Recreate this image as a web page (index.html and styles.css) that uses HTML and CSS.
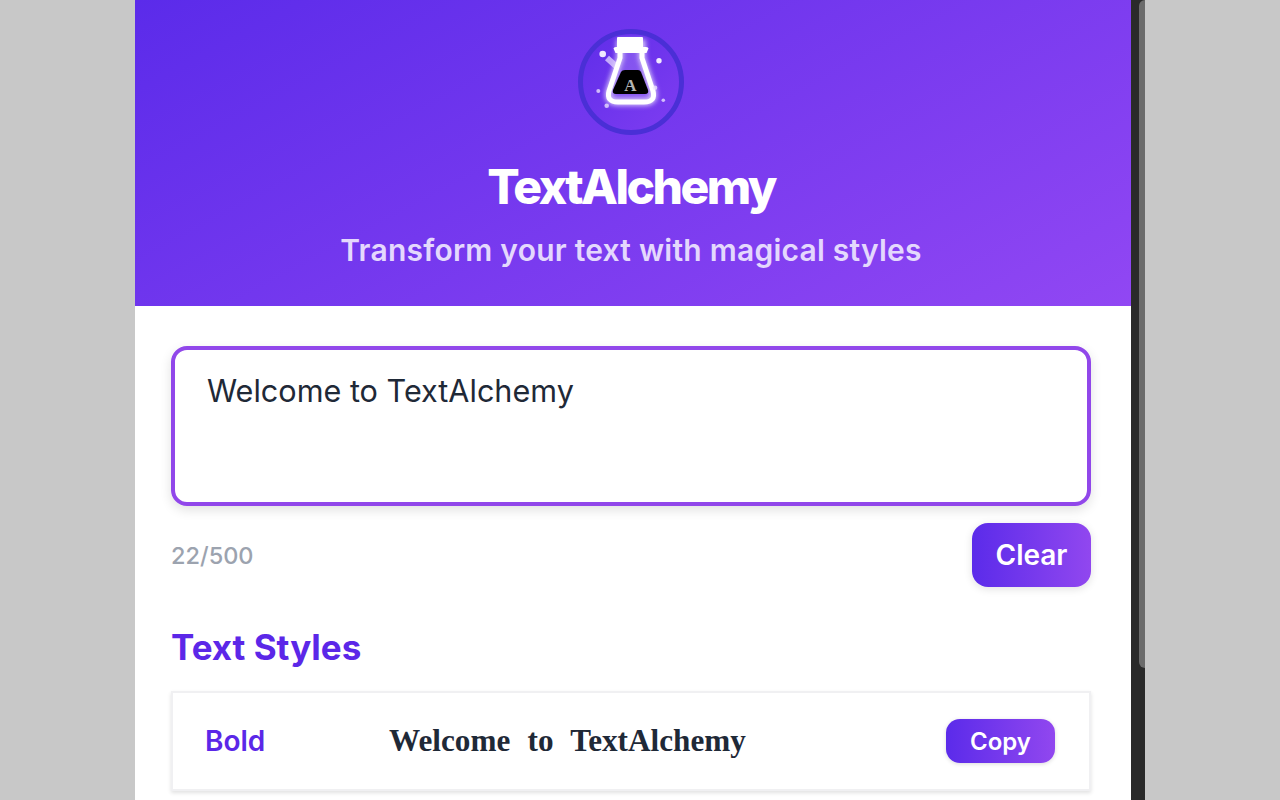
FILE: index.html
```
<!DOCTYPE html>
<html lang="en">
<head>
<meta charset="utf-8">
<title>TextAlchemy</title>
<link rel="stylesheet" href="styles.css">
</head>
<body>
<div class="frame">
  <main class="app">
    <header class="hero">
      <svg class="logo" width="108" height="108" viewBox="0 0 108 108">
        <defs>
          <linearGradient id="lg" x1="0" y1="0" x2="1" y2="1"><stop offset="0" stop-color="#5f2de9"/><stop offset="1" stop-color="#7f3df1"/></linearGradient>
          <filter id="glow" x="-30%" y="-30%" width="160%" height="160%"><feGaussianBlur stdDeviation="2.5"/></filter>
          <filter id="soft" x="-50%" y="-50%" width="200%" height="200%"><feGaussianBlur stdDeviation=".6"/></filter>
        </defs>
        <circle cx="54" cy="54" r="50.5" fill="url(#lg)" stroke="#4a2fd6" stroke-width="5"/>
        <path class="glass-glow" d="M43 15V30L32 63Q29 74 41 74H67Q79 74 76 63L65 30V15Z" filter="url(#glow)"/>
        <path class="wand" d="M30 30L40 39" filter="url(#soft)"/>
        <path class="liquid" d="M48 42H61Q63 42 64 44L71 62Q72 66 68 66H39Q35 66 36 62L44 44Q45 42 48 42Z"/>
        <path class="glass" d="M43 20V30L32 63Q29 74 41 74H67Q79 74 76 63L65 30V20"/>
        <rect class="cap" x="40" y="9" width="26" height="11" rx="1"/>
        <path class="collar" d="M36.500 20.500Q36.500 19 39 19H69Q71.500 19 71.500 20.500L69.500 25H38.500Z"/>
        <circle class="spark" cx="25.700" cy="26" r="3.300"/>
        <circle class="spark" cx="82" cy="32.700" r="2.700"/>
        <circle class="spark dim" cx="21.300" cy="63" r="2"/>
        <circle class="spark dim" cx="78" cy="59.700" r="2.300" filter="url(#soft)"/>
        <circle class="spark dim" cx="86.300" cy="72.300" r="1.800"/>
        <circle class="spark dim" cx="29.700" cy="77.700" r="2.300" filter="url(#soft)"/>
        <text class="logo-a" x="53.500" y="63" text-anchor="middle">A</text>
      </svg>
      <h1 class="title">TextAlchemy</h1>
      <p class="subtitle">Transform your text with magical styles</p>
    </header>
    <section class="content">
      <div class="input-box">Welcome to TextAlchemy</div>
      <div class="input-meta">
        <span class="count">22/500</span>
        <button class="btn btn-clear">Clear</button>
      </div>
      <h2 class="section-title">Text Styles</h2>
      <div class="style-card">
        <span class="style-name">Bold</span>
        <span class="style-text">Welcome to TextAlchemy</span>
        <button class="btn btn-copy">Copy</button>
      </div>
    </section>
  </main>
  <div class="scrollbar"><div class="thumb"></div></div>
</div>
</body>
</html>
```
FILE: styles.css
```
* { box-sizing: border-box; }
html, body { margin: 0; height: 100%; overflow: hidden; }
body { background: #c8c8c8; font-family: Inter, "Liberation Sans", sans-serif; }
.frame { width: 1010px; height: 800px; margin: 0 auto; display: flex; overflow: hidden; }
.app { width: 996px; background: #fff; flex: none; }
.scrollbar { width: 14px; height: 800px; background: #2a2a2a; padding-left: 8px; flex: none; }
.thumb { width: 6px; height: 668px; background: #6b6b6b; border-radius: 6px 0 0 6px; }
.hero { height: 306px; background: linear-gradient(152deg, #5b2bea 0%, #9147f3 100%); display: flex; flex-direction: column; align-items: center; padding: 28px 4px 0 0; color: #fff; }
.logo { display: block; flex: none; }
.glass-glow { fill: rgba(255,255,255,.22); stroke: #fff; stroke-width: 7; opacity: .75; }
.glass { fill: none; stroke: #fff; stroke-width: 5; stroke-linejoin: round; }
.liquid { fill: #000; }
.cap, .collar { fill: #fff; }
.wand { stroke: #e3d5ff; stroke-width: 6; opacity: .75; }
.spark { fill: #f0e8ff; }
.spark.dim { opacity: .75; }
.logo-a { font-family: "Liberation Serif", serif; font-weight: 700; font-size: 17px; fill: #b4b4b4; }
.title { margin: 23px 0 0; font-size: 48px; line-height: 56px; font-weight: 800; letter-spacing: -2.55px; }
.subtitle { margin: 17px 0 0; font-size: 30px; line-height: 36px; font-weight: 600; letter-spacing: .23px; color: #e4d8fd; }
.content { padding: 40px 40px 0 36px; }
.input-box { height: 160px; border: 4px solid #9147ea; border-radius: 16px; padding: 21px 32px; font-size: 30.6px; line-height: 40px; color: #1f2937; box-shadow: 0 4px 12px rgba(0,0,0,.12); }
.input-meta { display: flex; justify-content: space-between; align-items: center; margin-top: 17px; }
.count { font-size: 23.5px; font-weight: 500; color: #9ca3af; }
.btn { border: 0; color: #fff; font-family: inherit; font-weight: 600; background: linear-gradient(90deg, #5b2bea, #9147ef); }
.btn-clear { width: 119px; height: 64px; border-radius: 16px; font-size: 28px; box-shadow: 0 2px 8px rgba(0,0,0,.12); }
.section-title { margin: 38px 0 0; font-size: 35px; line-height: 44px; font-weight: 700; color: #5b27e8; }
.style-card { height: 100px; margin-top: 22px; background: #fff; border: 2px solid #f0f0f2; box-shadow: 0 2px 4px rgba(0,0,0,.12); display: flex; align-items: center; padding: 0 34px 0 32px; }
.style-name { width: 184px; flex: none; font-size: 28px; font-weight: 600; color: #5b27e8; }
.style-text { flex: 1; font-family: "Liberation Serif", serif; font-weight: 700; font-size: 31.2px; color: #1f2937; word-spacing: 9.5px; }
.btn-copy { width: 109px; height: 44px; border-radius: 14px; font-size: 24px; box-shadow: 0 1px 4px rgba(0,0,0,.15); }
```
